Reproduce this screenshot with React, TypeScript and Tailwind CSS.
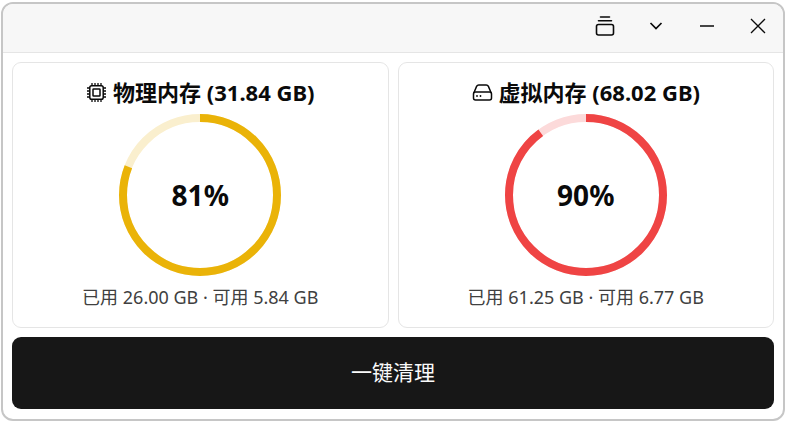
import type { ReactNode } from 'react';

interface MemoryInfo {
  id: string;
  title: string;
  icon: ReactNode;
  percent: number;
  used: string;
  free: string;
  ring: string;
  track: string;
}

function ChipIcon() {
  return (
    <svg viewBox="0 0 21 21" className="size-[21px]" fill="none" stroke="currentColor" strokeWidth="1.5">
      <rect x="3.8" y="3.8" width="13.4" height="13.4" rx="1.8" />
      <rect x="7" y="7" width="7" height="7" rx="0.6" />
      <path
        strokeWidth="1.3"
        d="M6 1v3M9 1v3M12 1v3M15 1v3M6 17v3M9 17v3M12 17v3M15 17v3M1 6h3M1 9h3M1 12h3M1 15h3M17 6h3M17 9h3M17 12h3M17 15h3"
      />
    </svg>
  );
}

function DriveIcon() {
  return (
    <svg viewBox="0 0 21 21" className="size-[21px]" fill="none" stroke="currentColor" strokeWidth="1.5">
      <path d="M1.8 11 4.6 4.4Q5.2 3 6.8 3h7.4q1.6 0 2.2 1.4L19.2 11" />
      <rect x="1.5" y="10" width="18" height="8" rx="2" />
      <circle cx="5" cy="14" r="0.9" fill="currentColor" stroke="none" />
      <circle cx="8.5" cy="14" r="0.9" fill="currentColor" stroke="none" />
    </svg>
  );
}

const memories: MemoryInfo[] = [
  {
    id: 'physical',
    title: '物理内存 (31.84 GB)',
    icon: <ChipIcon />,
    percent: 81,
    used: '26.00 GB',
    free: '5.84 GB',
    ring: 'stroke-[#eab308]',
    track: 'stroke-[#faefce]',
  },
  {
    id: 'virtual',
    title: '虚拟内存 (68.02 GB)',
    icon: <DriveIcon />,
    percent: 90,
    used: '61.25 GB',
    free: '6.77 GB',
    ring: 'stroke-[#ef4444]',
    track: 'stroke-[#fcdada]',
  },
];

function ProgressRing({ percent, ring, track }: Pick<MemoryInfo, 'percent' | 'ring' | 'track'>) {
  return (
    <div className="grid place-items-center">
      <svg viewBox="0 0 162 162" className="col-start-1 row-start-1 size-[162px] -rotate-90" fill="none" strokeWidth="8">
        <circle cx="81" cy="81" r="77" className={track} />
        <circle cx="81" cy="81" r="77" className={ring} pathLength={100} strokeDasharray={`${percent} 100`} />
      </svg>
      <span className="col-start-1 row-start-1 text-[28px] font-bold">{percent}%</span>
    </div>
  );
}

function MemoryCard({ memory }: { memory: MemoryInfo }) {
  return (
    <section className="flex flex-col items-center rounded-[9px] border border-[#e5e5e5] px-4 pt-[15px] pb-4">
      <h2 className="mb-2 flex items-center gap-[6px] text-[22px] leading-[28px] font-bold">
        {memory.icon}
        {memory.title}
      </h2>
      <ProgressRing percent={memory.percent} ring={memory.ring} track={memory.track} />
      <p className="mt-[7px] text-[18px] leading-[28px] text-[#404040]">
        已用 {memory.used} · 可用 {memory.free}
      </p>
    </section>
  );
}

function TitleButton({ label, children }: { label: string; children: ReactNode }) {
  return (
    <button type="button" aria-label={label} title={label} className="flex w-[51px] items-center justify-center hover:bg-[#e5e5e5]">
      {children}
    </button>
  );
}

export default function App() {
  return (
    <div className="min-h-screen bg-white px-px py-[2px] font-['Noto_Sans','Noto_Sans_CJK_SC',sans-serif] text-[#0a0a0a]">
      <div className="overflow-hidden rounded-[12px] border-2 border-[#c6c6c6] bg-white">
        {/* Title bar */}
        <header className="flex h-[49px] justify-end border-b border-[#e5e5e5] bg-[#f7f7f7] pb-1">
          <TitleButton label="置顶">
            <svg viewBox="0 0 20 20" className="size-5" fill="none" stroke="currentColor" strokeWidth="1.6" strokeLinecap="round">
              <path d="M5.5 1h9M3.5 4.8h13" />
              <rect x="1.5" y="8.5" width="17" height="10.5" rx="2" />
            </svg>
          </TitleButton>
          <TitleButton label="更多">
            <svg viewBox="0 0 14 8" className="h-2 w-[14px]" fill="none" stroke="currentColor" strokeWidth="1.7">
              <path d="M1.5 1 7 6.500 12.500 1" />
            </svg>
          </TitleButton>
          <TitleButton label="最小化">
            <svg viewBox="0 0 14 2" className="h-[2px] w-[14px]" stroke="currentColor" strokeWidth="1.3">
              <path d="M0 1h14" />
            </svg>
          </TitleButton>
          <TitleButton label="关闭">
            <svg viewBox="0 0 16 16" className="size-4" fill="none" stroke="currentColor" strokeWidth="1.3">
              <path d="M1 1l14 14M15 1L1 15" />
            </svg>
          </TitleButton>
        </header>

        <main className="flex flex-col gap-[9px] p-[9px] pb-[10px]">
          <div className="grid grid-cols-2 gap-[9px]">
            {memories.map((memory) => (
              <MemoryCard key={memory.id} memory={memory} />
            ))}
          </div>
          <button type="button" className="h-[72px] rounded-[9px] bg-[#171717] text-[21px] text-[#fafafa] hover:bg-[#262626]">
            一键清理
          </button>
        </main>
      </div>
    </div>
  );
}
